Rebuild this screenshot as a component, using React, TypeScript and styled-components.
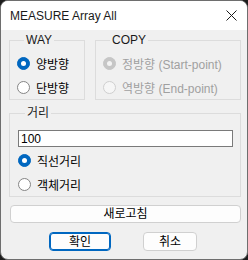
import React from 'react';
import styled, { createGlobalStyle } from 'styled-components';

const Global = createGlobalStyle`
  html, body { margin: 0; padding: 0; background: #1c1c1c; }
  body { width: 248px; height: 260px; overflow: hidden; }
`;

const FONT = `"Liberation Sans", "Noto Sans CJK KR", sans-serif`;

const Window = styled.div`
  box-sizing: border-box;
  width: 248px;
  height: 260px;
  border-radius: 8px;
  border: 1px solid #6e6e6e;
  overflow: hidden;
  background: #f0f0f0;
  font-family: ${FONT};
  font-size: 12px;
  color: #000;
  display: flex;
  flex-direction: column;
`;

const TitleBar = styled.div`
  height: 29px;
  background: #fff;
  display: flex;
  align-items: center;
  justify-content: space-between;
  padding: 0 10px 0 9px;
  flex-shrink: 0;
`;

const Title = styled.span`
  font-size: 12px;
  color: #1a1a1a;
  padding-top: 1px;
`;

const Body = styled.div`
  padding: 3px 6px 0 8px;
  display: flex;
  flex-direction: column;
`;

const GroupRow = styled.div`
  display: grid;
  grid-template-columns: 76px 1fr;
  gap: 10px;
`;

const Group = styled.fieldset`
  margin: 0;
  border: 1px solid #dcdcdc;
  padding: 4px 0 0 7px;
  min-width: 0;
  display: flex;
  flex-direction: column;
`;

const Legend = styled.legend`
  padding: 0 2px;
  margin-left: 7px;
  line-height: 14px;
  font-size: 12px;
  color: #1a1a1a;
`;

const RadioRow = styled.label<{ disabled?: boolean }>`
  height: 24px;
  display: flex;
  align-items: center;
  gap: 6px;
  color: ${p => (p.disabled ? '#a0a0a0' : '#000')};
  white-space: nowrap;
`;

const Dot = styled.span<{ checked?: boolean; disabled?: boolean }>`
  box-sizing: border-box;
  width: 13px;
  height: 13px;
  border-radius: 50%;
  flex-shrink: 0;
  display: flex;
  align-items: center;
  justify-content: center;
  background: ${p =>
    p.checked ? (p.disabled ? '#c6c6c6' : '#0067c0') : p.disabled ? '#f6f6f6' : '#fff'};
  border: 1px solid
    ${p => (p.checked ? (p.disabled ? '#c6c6c6' : '#0067c0') : p.disabled ? '#cfcfcf' : '#858585')};
  &::after {
    content: '';
    display: ${p => (p.checked ? 'block' : 'none')};
    width: 5px;
    height: 5px;
    border-radius: 50%;
    background: ${p => (p.disabled ? '#f3f3f3' : '#fff')};
  }
`;

const DistGroup = styled(Group)`
  margin-top: 6px;
  padding: 10px 7px 0 8px;
`;

const TextBox = styled.input`
  box-sizing: border-box;
  height: 17px;
  width: 100%;
  margin: 0 0 1px;
  border: 1px solid #7a7a7a;
  background: #fff;
  font-family: ${FONT};
  font-size: 12px;
  padding: 0 2px;
  outline: none;
`;

const Button = styled.button<{ $primary?: boolean; $width?: number }>`
  box-sizing: border-box;
  font-family: ${FONT};
  font-size: 12px;
  color: #000;
  background: #fdfdfd;
  border: 1px solid ${p => (p.$primary ? '#0067c0' : '#d0d0d0')};
  box-shadow: ${p => (p.$primary ? 'inset 0 0 0 1px #0067c0' : 'none')};
  border-radius: 4px;
  padding: 0;
  width: ${p => (p.$width ? `${p.$width}px` : 'auto')};
  height: 19px;
  line-height: 16px;
`;

const RefreshButton = styled(Button)`
  margin: 8px 0 0 1px;
  height: 18px;
`;

const ButtonRow = styled.div`
  display: flex;
  justify-content: center;
  gap: 32px;
  margin-top: 9px;
  padding-right: 4px;
`;

const Radio = ({ label, checked, disabled }: { label: string; checked?: boolean; disabled?: boolean }) => (
  <RadioRow disabled={disabled}>
    <Dot checked={checked} disabled={disabled} />
    {label}
  </RadioRow>
);

const App = () => (
  <>
    <Global />
    <Window>
      <TitleBar>
        <Title>MEASURE Array All</Title>
        <svg width="11" height="11" viewBox="0 0 11 11">
          <path d="M0.5 0.5 L10.5 10.5 M10.5 0.5 L0.5 10.5" stroke="#1a1a1a" strokeWidth="1" />
        </svg>
      </TitleBar>
      <Body>
        <GroupRow>
          <Group>
            <Legend>WAY</Legend>
            <Radio label="양방향" checked />
            <Radio label="단방향" />
          </Group>
          <Group>
            <Legend>COPY</Legend>
            <Radio label="정방향 (Start-point)" checked disabled />
            <Radio label="역방향 (End-point)" disabled />
          </Group>
        </GroupRow>
        <DistGroup>
          <Legend>거리</Legend>
          <TextBox defaultValue="100" />
          <Radio label="직선거리" checked />
          <Radio label="객체거리" />
        </DistGroup>
        <RefreshButton>새로고침</RefreshButton>
        <ButtonRow>
          <Button $primary $width={62}>확인</Button>
          <Button $width={54}>취소</Button>
        </ButtonRow>
      </Body>
    </Window>
  </>
);

export default App;
